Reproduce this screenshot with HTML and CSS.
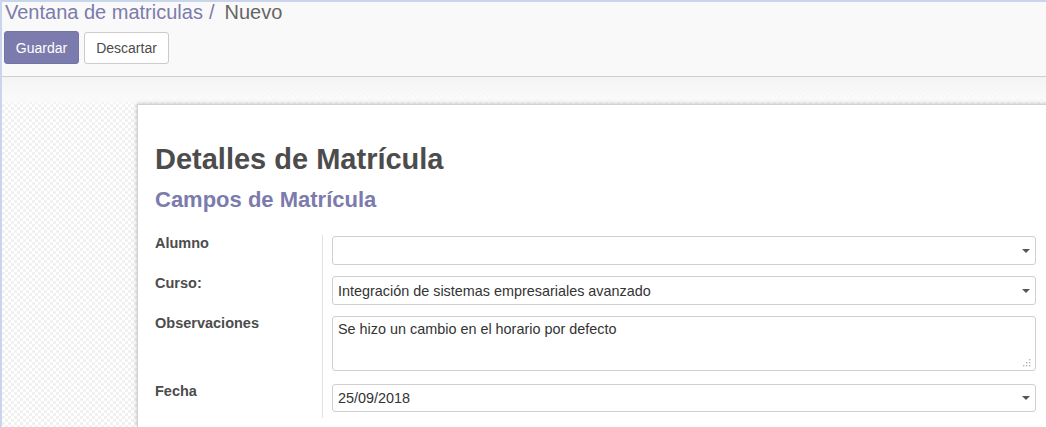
FILE: index.html
```html
<!DOCTYPE html>
<html lang="es">
<head>
<meta charset="utf-8">
<title>Ventana de matriculas</title>
<link rel="stylesheet" href="styles.css">
</head>
<body>
<div class="app">
  <div class="control-panel">
    <div class="breadcrumb"><span class="crumb-link">Ventana de matriculas</span><span class="crumb-sep">/</span><span class="crumb-active">Nuevo</span></div>
    <div class="buttons">
      <button class="btn btn-primary">Guardar</button>
      <button class="btn btn-default">Descartar</button>
    </div>
  </div>
  <div class="content">
    <div class="sheet">
      <h1 class="title">Detalles de Matrícula</h1>
      <h2 class="subtitle">Campos de Matrícula</h2>
      <div class="form-grid">
        <div class="label-cell r1">Alumno</div>
        <div class="field-cell r1">
          <div class="field select"><span class="value"></span><span class="caret"></span></div>
        </div>
        <div class="label-cell r2">Curso:</div>
        <div class="field-cell r2">
          <div class="field select"><span class="value">Integración de sistemas empresariales avanzado</span><span class="caret"></span></div>
        </div>
        <div class="label-cell r3">Observaciones</div>
        <div class="field-cell r3">
          <div class="field textarea"><span class="value">Se hizo un cambio en el horario por defecto</span>
            <svg class="grip" width="8" height="8" viewBox="0 0 8 8"><g fill="#b5b5b5"><rect x="6" y="0" width="1.4" height="1.4"/><rect x="6" y="3" width="1.4" height="1.4"/><rect x="3" y="3" width="1.4" height="1.4"/><rect x="6" y="6" width="1.4" height="1.4"/><rect x="3" y="6" width="1.4" height="1.4"/><rect x="0" y="6" width="1.4" height="1.4"/></g></svg>
          </div>
        </div>
        <div class="label-cell r4">Fecha</div>
        <div class="field-cell r4">
          <div class="field select date"><span class="value">25/09/2018</span><span class="caret"></span></div>
        </div>
      </div>
    </div>
  </div>
</div>
</body>
</html>
```

FILE: styles.css
```css
html, body {
  margin: 0;
  padding: 0;
  height: 100%;
  overflow: hidden;
}
body {
  font-family: "Liberation Sans", Arial, sans-serif;
  color: #4c4c4c;
  background: #ffffff;
}
.app {
  height: 100%;
  border-top: 2px solid #c9d5ea;
  border-left: 2px solid #c9d5ea;
  box-sizing: border-box;
  display: flex;
  flex-direction: column;
}
.control-panel {
  height: 74px;
  background: #f9f9f9;
  border-bottom: 1px solid #cfcfcf;
  padding: 0 0 0 2px;
  flex: none;
}
.breadcrumb {
  font-size: 20px;
  line-height: 20px;
  height: 20px;
  padding-left: 1px;
  margin-top: 0;
  white-space: nowrap;
}
.crumb-link { color: #7c7bad; }
.crumb-sep { color: #7c7bad; margin: 0 10px 0 6px; }
.crumb-active { color: #666666; }
.buttons {
  display: flex;
  gap: 5px;
  margin-top: 9px;
}
.btn {
  font-family: "Liberation Sans", Arial, sans-serif;
  font-size: 14px;
  height: 33px;
  border-radius: 3px;
  padding: 0 8px;
  margin: 0;
  cursor: pointer;
}
.btn-primary {
  background: #7c7bad;
  color: #ffffff;
  border: 1px solid #7574a6;
  width: 75px;
}
.btn-default {
  background: #ffffff;
  color: #4c4c4c;
  border: 1px solid #cccccc;
  width: 85px;
  height: 32px;
  margin-top: 1px;
}
.content {
  flex: 1;
  min-height: 0;
  padding: 27px 0 0 135px;
  background:
    linear-gradient(#f4f4f4, rgba(250,250,250,0.85) 22px, rgba(255,255,255,0) 30px),
    repeating-conic-gradient(#f1f1f1 0 25%, #ffffff 0 50%) 0 0 / 6px 6px;
}
.sheet {
  background: #ffffff;
  height: 100%;
  box-shadow: 0 0 4px rgba(0,0,0,0.25);
  border-top: 1px solid #d2d2d2;
  border-left: 1px solid #d2d2d2;
  padding: 37px 10px 0 17px;
  box-sizing: border-box;
}
.title {
  font-size: 29px;
  line-height: 34px;
  font-weight: bold;
  color: #4c4c4c;
  margin: 0;
}
.subtitle {
  font-size: 22px;
  line-height: 26px;
  font-weight: bold;
  color: #7c7bad;
  margin: 11px 0 0 0;
}
.form-grid {
  display: grid;
  grid-template-columns: 168px 1fr;
  margin-top: 22px;
}
.label-cell {
  font-size: 14.5px;
  font-weight: bold;
  color: #4c4c4c;
  border-right: 1px solid #e2e2e2;
  padding-top: 0;
  line-height: 16px;
}
.field-cell {
  padding: 1px 0 10px 9px;
}
.field-cell.r3 { padding-bottom: 12px; }
.field-cell.r4 { padding-bottom: 6px; }
.field {
  height: 29px;
  border: 1px solid #d0d0d0;
  border-radius: 3px;
  box-sizing: border-box;
  display: flex;
  align-items: center;
  padding: 0 5px;
  font-size: 14.4px;
  color: #333333;
  position: relative;
  background: #ffffff;
}
.field.date { height: 28px; }
.value { flex: 1; white-space: nowrap; }
.caret {
  width: 0;
  height: 0;
  border-left: 4px solid transparent;
  border-right: 4px solid transparent;
  border-top: 4px solid #555555;
  margin-right: 0;
}
.field.textarea {
  height: 55px;
  align-items: flex-start;
  padding-top: 4px;
}
.grip {
  position: absolute;
  right: 4px;
  bottom: 3px;
}
```
